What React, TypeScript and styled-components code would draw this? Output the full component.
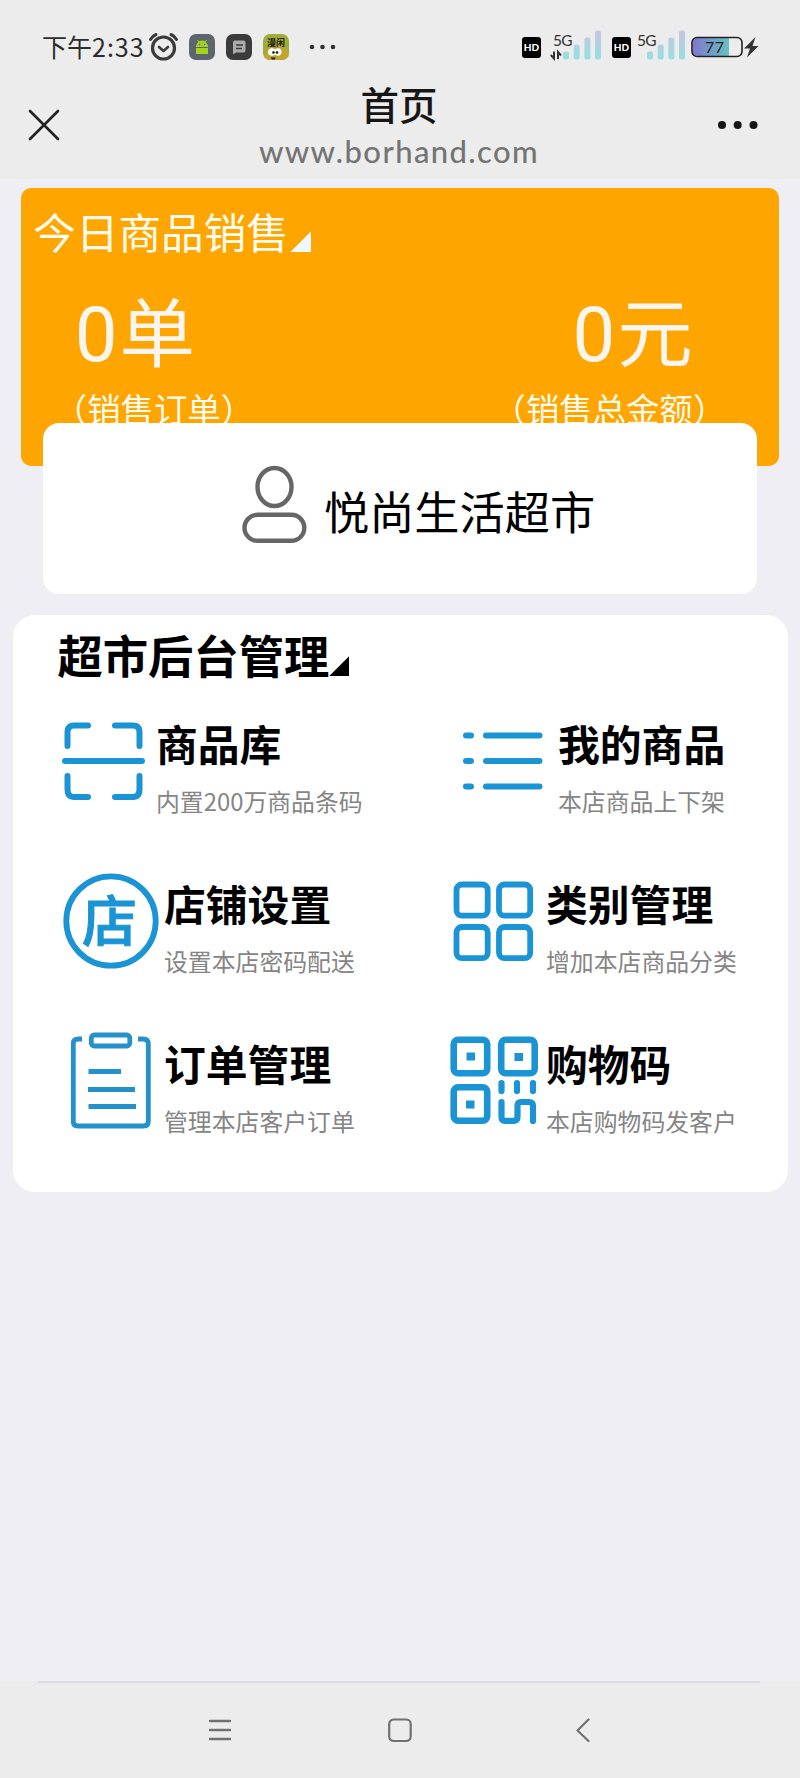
import React from 'react';
import styled, { createGlobalStyle } from 'styled-components';

const BLUE = '#1a94d4';

const GlobalStyle = createGlobalStyle`
  * { box-sizing: border-box; }
  body {
    margin: 0;
    background: #efeef4;
    font-family: "Noto Sans CJK SC", "Noto Sans", sans-serif;
    color: #000;
  }
  svg { display: block; flex: none; }
`;

const Screen = styled.div`
  width: 800px;
  height: 1778px;
  display: flex;
  flex-direction: column;
  overflow: hidden;
`;

const Header = styled.header`
  flex: none;
  height: 179px;
  background: #ececec;
`;

const StatusBar = styled.div`
  height: 82px;
  padding: 12px 40px 0 42px;
  display: flex;
  align-items: center;
  justify-content: space-between;
`;

const StatusGroup = styled.div`
  display: flex;
  align-items: center;
`;

const Clock = styled.span`
  font-size: 25px;
  line-height: 36px;
  width: 106px;
  margin-top: -2px;
  color: #2c2c2c;
  white-space: nowrap;
`;

const ClockDigits = styled.span`
  letter-spacing: 1px;
`;

const AppTile = styled.div<{ $bg: string }>`
  width: 26px;
  height: 26px;
  border-radius: 7px;
  margin-right: 11px;
  background: ${(p) => p.$bg};
  overflow: hidden;
`;

const HdTile = styled.span`
  width: 19px;
  height: 21px;
  border-radius: 3px;
  background: #000;
  color: #fff;
  font: 900 10px/21px Lato, sans-serif;
  text-align: center;
`;

const SignalSlot = styled.div<{ $before: number; $after: number }>`
  margin: -5px ${(p) => p.$after}px 0 ${(p) => p.$before}px;
`;

const TitleBar = styled.div`
  height: 97px;
  padding: 0 41px 0 28px;
  display: grid;
  grid-template-columns: 100px 1fr 89px;
`;

const TitleAction = styled.div<{ $end?: boolean }>`
  display: flex;
  height: 85px;
  align-items: center;
  justify-content: ${(p) => (p.$end ? 'flex-end' : 'flex-start')};
`;

const TitleText = styled.div`
  text-align: center;
  white-space: nowrap;
`;

const PageTitle = styled.div`
  font-size: 38.5px;
  font-weight: 500;
  line-height: 42px;
  color: #161616;
`;

const PageUrl = styled.div`
  font-family: Lato, sans-serif;
  font-size: 31px;
  font-weight: 500;
  line-height: 55px;
  letter-spacing: 1.4px;
  color: #747474;
`;

const Main = styled.main`
  flex: 1;
  padding-top: 9px;
`;

const SalesCard = styled.section`
  width: 757.5px;
  height: 278px;
  margin-left: 21.3px;
  padding-top: 12px;
  border-radius: 10px;
  background: #ffa500;
  color: #fffbee;
`;

const SalesTitle = styled.div`
  display: flex;
  align-items: flex-end;
  padding-left: 12px;
  font-size: 42.6px;
  line-height: 61px;
`;

const Corner = styled.i<{ $size: number; $color: string; $lift: number; $gap: number }>`
  width: ${(p) => p.$size}px;
  height: ${(p) => p.$size}px;
  margin-bottom: ${(p) => p.$lift}px;
  margin-left: ${(p) => p.$gap}px;
  background: ${(p) => p.$color};
  clip-path: polygon(100% 0, 100% 100%, 0 100%);
`;

const Stats = styled.div`
  display: flex;
  justify-content: space-between;
  padding: 22px 52.5px 0 32.5px;
`;

const StatValue = styled.div<{ $indent: number }>`
  height: 90px;
  padding-left: ${(p) => p.$indent}px;
  font-size: 75.5px;
  line-height: 90px;
  color: #fbf5ee;
`;

const StatNumber = styled.span`
  font-family: Roboto, sans-serif;
  font-size: 76px;
  letter-spacing: 2px;
`;

const StatLabel = styled.div`
  margin-top: 9.5px;
  font-size: 33.4px;
  line-height: 50px;
  white-space: nowrap;
`;

const StoreCard = styled.section`
  position: relative;
  width: 714px;
  height: 171px;
  margin: -43px auto 0;
  padding-left: 199px;
  display: flex;
  border-radius: 16px;
  background: #fff;
`;

const StoreIcon = styled.div`
  padding-top: 42px;
`;

const StoreName = styled.div`
  margin: 55px 0 0 16px;
  font-size: 45.2px;
  line-height: 65px;
  white-space: nowrap;
`;

const Panel = styled.section`
  width: 775px;
  height: 577px;
  margin: 21px 0 0 12.5px;
  padding-top: 9px;
  border-radius: 22px;
  background: #fff;
`;

const PanelTitle = styled.h1`
  margin: 0 0 21px;
  padding-left: 45px;
  display: flex;
  align-items: flex-end;
  font-size: 45.3px;
  line-height: 60px;
  font-weight: 700;
`;

const EntryGrid = styled.div`
  display: grid;
  grid-template-columns: 387.5px 387.5px;
  grid-auto-rows: 160px;
`;

const Entry = styled.div<{ $left: number }>`
  display: flex;
  padding-left: ${(p) => p.$left}px;
`;

const EntryIcon = styled.div<{ $top: number; $width: number }>`
  flex: none;
  width: ${(p) => p.$width}px;
  padding-top: ${(p) => p.$top}px;
`;

const EntryTitle = styled.h2`
  margin: 0;
  padding-top: 9.5px;
  font-size: 41.8px;
  line-height: 56px;
  font-weight: 700;
  white-space: nowrap;
`;

const EntryNote = styled.p`
  margin: 12px 0 0;
  font-size: 23.85px;
  line-height: 35px;
  color: #858585;
  white-space: nowrap;
`;

const NavBar = styled.nav`
  flex: none;
  height: 97px;
  background: #ececec;
`;

const NavLine = styled.div`
  height: 2px;
  margin: 0 40px 0 38px;
  background: #dcdbe2;
`;

const NavButtons = styled.div`
  height: 94px;
  padding: 0 210px 0 208px;
  display: grid;
  grid-template-columns: 179px 1fr auto;
  align-items: center;
`;

const AlarmIcon = () => (
  <svg width="41" height="30" viewBox="0 0 41 30" fill="none" stroke="#3a3a3a" strokeLinecap="round">
    <circle cx="15.5" cy="16" r="11" strokeWidth="3.2" />
    <path d="M11 15l4.5 4 4.5-4" strokeWidth="2.6" strokeLinejoin="round" />
    <path d="M2.500 7.500Q4.500 4 8 2.500M23 2.500Q26.500 4 28.500 7.500" strokeWidth="3" />
  </svg>
);

const AndroidIcon = () => (
  <svg width="26" height="26" viewBox="0 0 26 26">
    <path d="M7 13a6 6.500 0 0 1 12 0zM7 14h12v6H7z" fill="#a4d221" />
    <path d="M8.500 6l2 3M17.500 6l-2 3" stroke="#a4d221" />
    <circle cx="10.500" cy="10.500" r=".8" fill="#5c666c" />
    <circle cx="15.500" cy="10.500" r=".8" fill="#5c666c" />
  </svg>
);

const MessageIcon = () => (
  <svg width="26" height="26" viewBox="0 0 26 26">
    <path d="M8.500 6.500h9a2 2 0 0 1 2 2v8a2 2 0 0 1-2 2H10l-3 2v-12a2 2 0 0 1 1.500-2z" fill="#ababab" />
    <path d="M10 11h7M10 14.500h6" stroke="#3b3b3b" strokeWidth="1.500" />
  </svg>
);

const ComicIcon = () => (
  <svg width="26" height="26" viewBox="0 0 26 26">
    <path d="M1 26q2-15 14-13 10 0 11 7v6z" fill="#c0a530" />
    <text x="4" y="11.500" fontSize="9" fontWeight="700" fill="#26220c">漫闲</text>
    <ellipse cx="9" cy="18" rx="4" ry="3.800" fill="#fff" />
    <ellipse cx="15" cy="18" rx="3.500" ry="3.800" fill="#fff" />
    <circle cx="10.500" cy="18.500" r="1.300" fill="#111" />
    <circle cx="14" cy="18.500" r="1.300" fill="#111" />
    <path d="M7.500 23q3 1 5 0l-.5 2.500h-3z" fill="#222" />
  </svg>
);

const MoreSmall = () => (
  <svg width="40" height="10" viewBox="0 0 40 10" fill="#333">
    <circle cx="12" cy="5" r="2.300" />
    <circle cx="22.500" cy="5" r="2.300" />
    <circle cx="33" cy="5" r="2.300" />
  </svg>
);

const Signal = ({ data, id }: { data?: boolean; id: string }) => {
  const x = data ? 13 : 10;
  return (
    <svg width={data ? 52 : 49} height="32" viewBox={`0 0 ${data ? 52 : 49} 32`}>
      <defs>
        <linearGradient id={id} x1="0" y1="0" x2="0" y2="31" gradientUnits="userSpaceOnUse">
          <stop offset="0" stopColor="#cdc0e2" />
          <stop offset=".5" stopColor="#b0d2e0" />
          <stop offset="1" stopColor="#90e1e0" />
        </linearGradient>
      </defs>
      <g fill={`url(#${id})`}>
        <rect x={x} y="22.500" width="6" height="8" rx="2.500" />
        <rect x={x + 10.7} y="15.500" width="6" height="15" rx="2.500" />
        <rect x={x + 21.4} y="8.500" width="6" height="22" rx="2.500" />
        <rect x={x + 32} y="1.500" width="6" height="29" rx="2.500" />
      </g>
      <text x={data ? 3 : 0} y="16.500" fontFamily="Lato" fontSize="15.500" fill="#333" textLength="19.500">5G</text>
      {data && <path d="M4 22.500v7L.8 26M8 30v-7l3 3.500" fill="none" stroke="#333" strokeWidth="2" />}
    </svg>
  );
};

const Battery = () => (
  <svg width="69" height="24" viewBox="0 0 69 24">
    <defs>
      <linearGradient id="charge">
        <stop offset="0" stopColor="#7f77cf" />
        <stop offset="1" stopColor="#67bfc1" />
      </linearGradient>
    </defs>
    <path d="M6.500 3H38v18H6.500a5 5 0 0 1-5-5V8a5 5 0 0 1 5-5z" fill="url(#charge)" />
    <rect x="1" y="2.500" width="50" height="19" rx="5" fill="none" stroke="#222" strokeWidth="1.600" />
    <text x="14" y="18" fontFamily="Lato" fontSize="16" fill="#222" textLength="19">77</text>
    <path d="M64.500 2L53 13.500h6L56 22.500 67.500 11h-6z" fill="#333" />
  </svg>
);

const PersonIcon = () => (
  <svg width="66" height="80" viewBox="0 0 66 80" fill="none" stroke="#666" strokeWidth="4.400">
    <ellipse cx="32.500" cy="22" rx="17" ry="19" />
    <rect x="2.500" y="49.800" width="59.800" height="26" rx="13" />
  </svg>
);

const ScanIcon = () => (
  <svg width="84" height="80" viewBox="0 0 84 80" fill="none" stroke={BLUE} strokeWidth="6" strokeLinecap="round">
    <path d="M5.500 25V11q0-6.500 6.500-6.500H26M53 4.500H71q6.500 0 6.500 6.500V25M5.500 55V68q0 8 6 8H26M53 76H71q6.500 0 6.500-8V55M3 40H80" />
  </svg>
);

const ListIcon = () => (
  <svg width="82" height="60" viewBox="0 0 82 60" fill="none" stroke={BLUE} strokeWidth="6" strokeLinecap="round">
    <path d="M4 4.500H9M24 4.500H77.500M4 30H9M24 30H77.500M4 55.500H9M24 55.500H77.500" />
  </svg>
);

const StoreBadge = () => (
  <svg width="96" height="96" viewBox="0 0 96 96">
    <circle cx="48" cy="48" r="44.700" fill="none" stroke={BLUE} strokeWidth="5.800" />
    <text x="46.500" y="68" textAnchor="middle" fontSize="55" fontWeight="500" fill={BLUE} stroke={BLUE} strokeWidth="1">店</text>
  </svg>
);

const GridIcon = () => (
  <svg width="82" height="82" viewBox="0 0 82 82" fill="none" stroke={BLUE} strokeWidth="5.800">
    {[3.5, 46].map((y) =>
      [3.5, 46].map((x) => <rect key={`${x}-${y}`} x={x} y={y} width="31.200" height="31.200" rx="5.500" />)
    )}
  </svg>
);

const OrderIcon = () => (
  <svg width="82" height="98" viewBox="0 0 82 98" fill="none" stroke="#2490cc" strokeWidth="4.800">
    <path d="M12 7H8.500Q3.300 7 3.300 12V89.500Q3.300 94 8 94H73.500Q78.300 94 78.300 89.500V12Q78.300 7 73 7H68" />
    <rect x="21.300" y="3" width="38.500" height="11" rx="3" />
    <path d="M18.500 39.500H51M18 57.500H65M18.500 74.500H66" />
  </svg>
);

const QrIcon = () => (
  <svg width="90" height="90" viewBox="0 0 90 90" fill="none" stroke={BLUE} strokeWidth="6.600">
    <rect x="3.700" y="3.700" width="33.500" height="33.500" rx="4.500" />
    <rect x="51.200" y="3.700" width="33.500" height="33.500" rx="4.500" />
    <rect x="3.700" y="51.200" width="33.500" height="33.500" rx="4.500" />
    <g fill={BLUE} stroke="none">
      <rect x="16.500" y="16.500" width="8.500" height="8" />
      <rect x="64.500" y="17" width="8.500" height="8" />
      <rect x="16" y="64.500" width="8.500" height="8" />
    </g>
    <path d="M51.500 47V55M67 47V55M83 47V55M51.500 66V81Q51.500 84.800 55 84.800H63.500Q67.500 84.800 67.500 81V70Q67.500 66 71 66H79Q83 66 83 70V85" strokeLinecap="round" strokeWidth="6.200" />
  </svg>
);

type EntryData = {
  title: string;
  note: string;
  left: number;
  iconTop: number;
  iconWidth: number;
  icon: React.ReactNode;
};

const entries: EntryData[] = [
  { title: '商品库', note: '内置200万商品条码', left: 49.5, iconTop: 15.5, iconWidth: 94, icon: <ScanIcon /> },
  { title: '我的商品', note: '本店商品上下架', left: 62, iconTop: 26, iconWidth: 96, icon: <ListIcon /> },
  { title: '店铺设置', note: '设置本店密码配送', left: 50.5, iconTop: 8, iconWidth: 101, icon: <StoreBadge /> },
  { title: '类别管理', note: '增加本店商品分类', left: 52.5, iconTop: 16, iconWidth: 93.5, icon: <GridIcon /> },
  { title: '订单管理', note: '管理本店客户订单', left: 57.5, iconTop: 7, iconWidth: 94, icon: <OrderIcon /> },
  { title: '购物码', note: '本店购物码发客户', left: 49.5, iconTop: 11, iconWidth: 96.5, icon: <QrIcon /> },
];

export default function App() {
  return (
    <Screen>
      <GlobalStyle />
      <Header>
        <StatusBar>
          <StatusGroup>
            <Clock>下午<ClockDigits>2:33</ClockDigits></Clock>
            <AlarmIcon />
            <AppTile $bg="#5c666c"><AndroidIcon /></AppTile>
            <AppTile $bg="#3b3b3b"><MessageIcon /></AppTile>
            <AppTile $bg="#9fac3b"><ComicIcon /></AppTile>
            <MoreSmall />
          </StatusGroup>
          <StatusGroup>
            <HdTile>HD</HdTile>
            <SignalSlot $before={9} $after={10}><Signal data id="sim1" /></SignalSlot>
            <HdTile>HD</HdTile>
            <SignalSlot $before={6} $after={5}><Signal id="sim2" /></SignalSlot>
            <Battery />
          </StatusGroup>
        </StatusBar>
        <TitleBar>
          <TitleAction>
            <svg width="32" height="32" viewBox="0 0 32 32" stroke="#222" strokeWidth="2.600" strokeLinecap="round">
              <path d="M2 2l28 28M30 2L2 30" />
            </svg>
          </TitleAction>
          <TitleText>
            <PageTitle>首页</PageTitle>
            <PageUrl>www.borhand.com</PageUrl>
          </TitleText>
          <TitleAction $end>
            <svg width="42" height="10" viewBox="0 0 42 10" fill="#161616">
              <circle cx="5" cy="5" r="4" />
              <circle cx="20.700" cy="5" r="4" />
              <circle cx="36.500" cy="5" r="4" />
            </svg>
          </TitleAction>
        </TitleBar>
      </Header>

      <Main>
        <SalesCard>
          <SalesTitle>今日商品销售<Corner $size={21} $color="#f0f8ff" $lift={9} $gap={1.5} /></SalesTitle>
          <Stats>
            <div>
              <StatValue $indent={21}><StatNumber>0</StatNumber>单</StatValue>
              <StatLabel>（销售订单）</StatLabel>
            </div>
            <div>
              <StatValue $indent={80}><StatNumber>0</StatNumber>元</StatValue>
              <StatLabel>（销售总金额）</StatLabel>
            </div>
          </Stats>
        </SalesCard>

        <StoreCard>
          <StoreIcon><PersonIcon /></StoreIcon>
          <StoreName>悦尚生活超市</StoreName>
        </StoreCard>

        <Panel>
          <PanelTitle>超市后台管理<Corner $size={20} $color="#000" $lift={8} $gap={0} /></PanelTitle>
          <EntryGrid>
            {entries.map((e) => (
              <Entry key={e.title} $left={e.left}>
                <EntryIcon $top={e.iconTop} $width={e.iconWidth}>{e.icon}</EntryIcon>
                <div>
                  <EntryTitle>{e.title}</EntryTitle>
                  <EntryNote>{e.note}</EntryNote>
                </div>
              </Entry>
            ))}
          </EntryGrid>
        </Panel>
      </Main>

      <NavBar>
        <NavLine />
        <NavButtons>
          <svg width="24" height="24" viewBox="0 0 24 24" stroke="#707070" strokeWidth="2.400" strokeLinecap="round">
            <path d="M2 3H22M2 12H22M2 21H22" />
          </svg>
          <svg width="26" height="26" viewBox="0 0 26 26" fill="none" stroke="#707070" strokeWidth="2.200">
            <rect x="2.200" y="2.500" width="21.500" height="21.500" rx="4.500" />
          </svg>
          <svg width="14" height="26" viewBox="0 0 14 26" fill="none" stroke="#707070" strokeWidth="2.200" strokeLinecap="round" strokeLinejoin="round">
            <path d="M12.500 2.500L1.500 13.500 12.500 24" />
          </svg>
        </NavButtons>
      </NavBar>
    </Screen>
  );
}
